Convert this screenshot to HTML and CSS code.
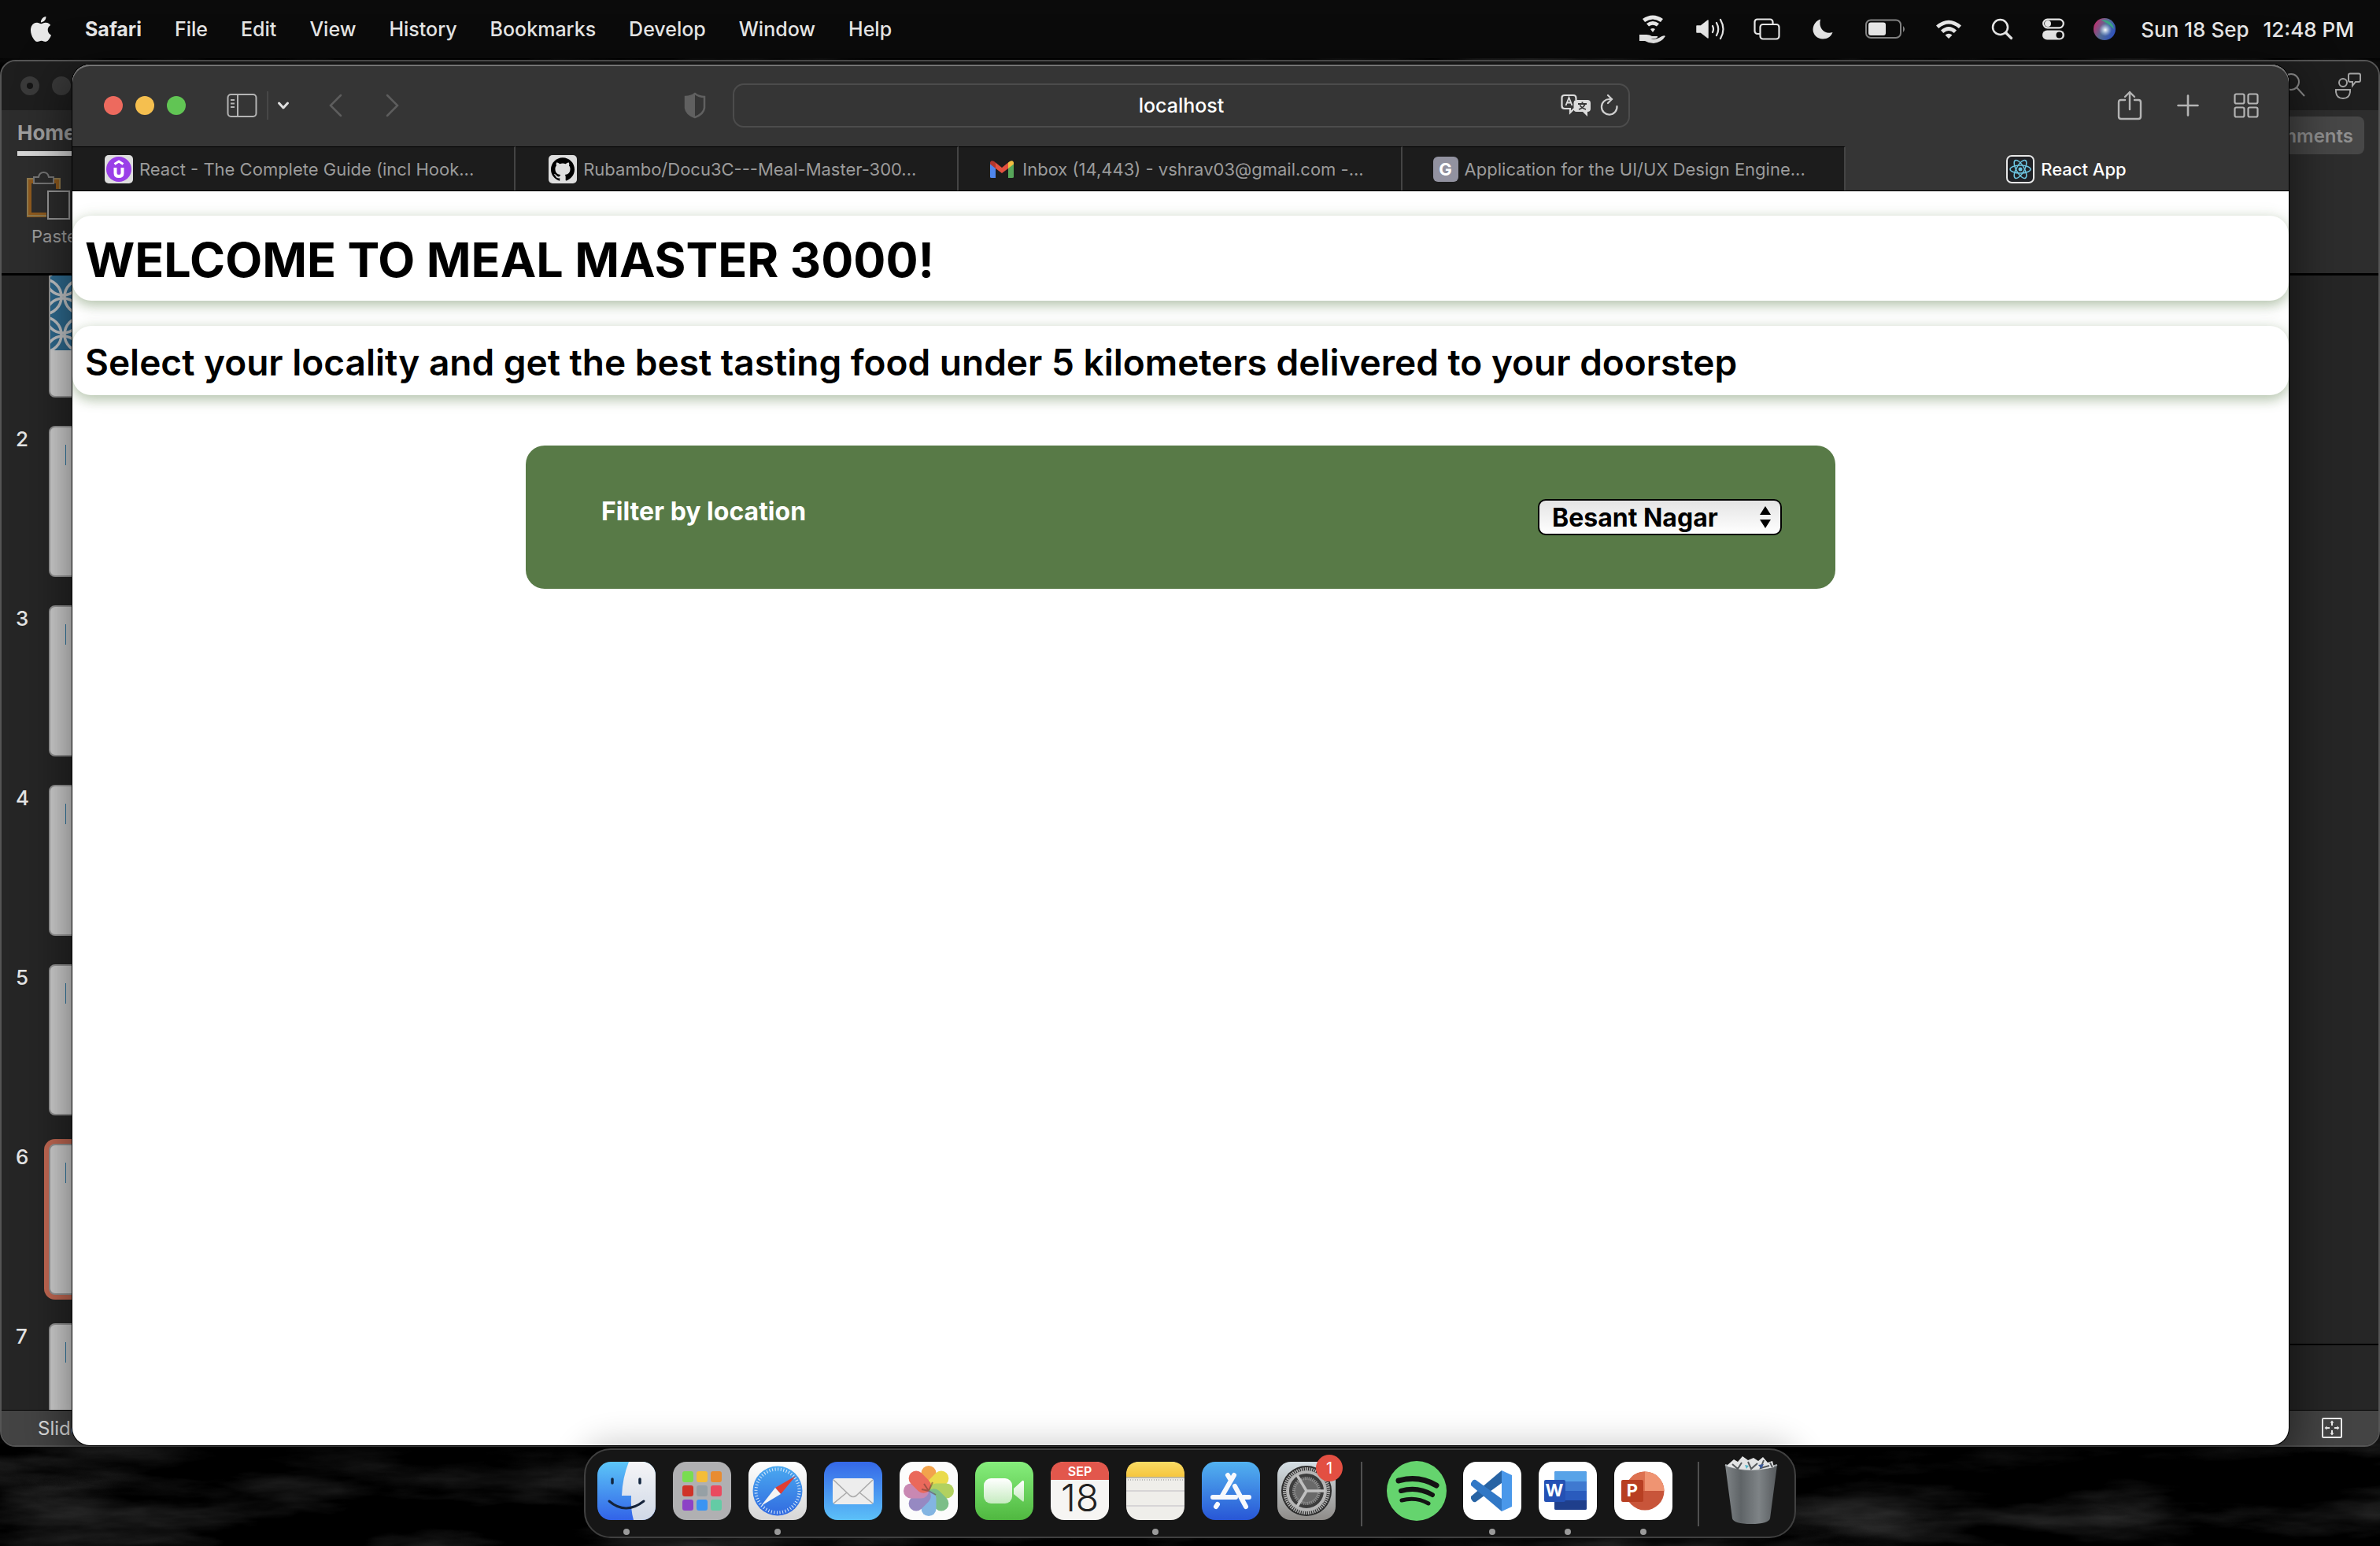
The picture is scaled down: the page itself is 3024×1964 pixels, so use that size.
FILE: index.html
```html
<!DOCTYPE html>
<html lang="en">
<head>
<meta charset="utf-8">
<meta name="viewport" content="width=device-width, initial-scale=1">
<title>React App</title>
<link rel="stylesheet" href="styles.css">
</head>
<body>
<div class="desktop">
  <svg class="wallpaper" aria-hidden="true">
    <filter id="waves" x="0" y="0" width="100%" height="100%" color-interpolation-filters="sRGB">
      <feTurbulence type="fractalNoise" baseFrequency="0.004 0.02" numOctaves="5" seed="8"/>
      <feColorMatrix values="0.4 0 0 0 -0.18  0.4 0 0 0 -0.18  0.4 0 0 0 -0.18  0 0 0 0 1"/>
    </filter>
    <rect width="100%" height="100%" filter="url(#waves)"/>
  </svg>

  <header class="menubar">
    <nav class="menus" aria-label="Application menu">
      <button class="menu" aria-label="Apple"><svg width="28" height="32" viewBox="1.500 0 21 24" fill="currentColor"><path d="M12.152 6.896c-.948 0-2.415-1.078-3.96-1.04-2.04.027-3.91 1.183-4.961 3.014-2.117 3.675-.546 9.103 1.519 12.09 1.013 1.454 2.208 3.09 3.792 3.039 1.52-.065 2.09-.987 3.935-.987 1.831 0 2.35.987 3.96.948 1.637-.026 2.676-1.48 3.676-2.948 1.156-1.688 1.636-3.325 1.662-3.415-.039-.013-3.182-1.221-3.22-4.857-.026-3.04 2.48-4.494 2.597-4.559-1.429-2.09-3.623-2.324-4.39-2.376-2-.156-3.675 1.09-4.61 1.09zM15.53 3.83c.843-1.012 1.4-2.427 1.245-3.83-1.207.052-2.662.805-3.532 1.818-.78.896-1.454 2.338-1.273 3.714 1.338.104 2.715-.688 3.559-1.701"/></svg></button>
      <button class="menu menu-app">Safari</button>
      <button class="menu">File</button>
      <button class="menu">Edit</button>
      <button class="menu">View</button>
      <button class="menu">History</button>
      <button class="menu">Bookmarks</button>
      <button class="menu">Develop</button>
      <button class="menu">Window</button>
      <button class="menu">Help</button>
    </nav>
    <div class="status">
      <svg width="36" height="38" viewBox="0 0 36 38" fill="#e8e8e8"><path d="M5 6Q18-3 31 6L28 10Q18 3 8 10ZM10 12Q18 6 26 12L23 15.500Q18 12 13 15.500ZM15 19Q18 17 21 19L18 23ZM1 26H10Q14 26 17 28H24Q25 30 20 31H15Q21 33 26 30Q32 26 34 28Q29 36 19 37Q13 37 8 34H1Z"/></svg>
      <svg width="36" height="28" viewBox="0 0 36 28" fill="none" stroke="#e8e8e8" stroke-width="2.200" stroke-linecap="round"><path d="M1 10H6L15 3V25L6 18H1Z" fill="#e8e8e8" stroke-width="1.500" stroke-linejoin="round"/><path d="M21 10Q23 14 21 18M26 6Q30.500 14 26 22M31 2Q38 14 31 26"/></svg>
      <svg width="34" height="28" viewBox="0 0 34 28" fill="none" stroke="#e8e8e8" stroke-width="2.200"><path d="M8 20H5a3.500 3.500 0 0 1-3.500-3.500V4.500A3.500 3.500 0 0 1 5 1.500H21a3.500 3.500 0 0 1 3.500 3.500V8"/><rect x="8.500" y="8" width="24" height="18.500" rx="3.500"/></svg>
      <svg width="34" height="28" viewBox="0 0 34 28" fill="#e8e8e8"><path d="M14 1.500C9 3 4.500 8 4.500 14.500C4.500 21 10 26.500 17 26.500C23 26.500 28 23 29.500 18C20 21 11 14 14 1.500Z"/></svg>
      <svg width="52" height="26" viewBox="0 0 52 26"><rect x="1" y="1.500" width="44" height="22.500" rx="6" fill="none" stroke="#848484" stroke-width="2"/><rect x="4" y="4.500" width="22" height="16.500" rx="3" fill="#e8e8e8"/><path d="M48 9q4 4 0 8Z" fill="#848484"/></svg>
      <svg width="34" height="26" viewBox="0 0 34 26" fill="#e8e8e8"><path d="M1 8.500Q17-5 33 8.500L29.800 12Q17 1 4.200 12ZM7 14.500Q17 5.500 27 14.500L23.800 18Q17 12 10.200 18ZM12.500 20.500Q17 17 21.500 20.500L17 25Z"/></svg>
      <svg width="28" height="28" viewBox="0 0 28 28" fill="none" stroke="#e8e8e8" stroke-linecap="round"><circle cx="11.500" cy="11.500" r="9.500" stroke-width="2.500"/><path d="M18.500 18.500L25.500 25.500" stroke-width="3.200"/></svg>
      <svg width="28" height="28" viewBox="0 0 28 28"><rect x="1.200" y="1.700" width="25.600" height="10.600" rx="5.300" fill="none" stroke="#e8e8e8" stroke-width="2.200"/><circle cx="7" cy="7" r="4" fill="#e8e8e8"/><rect x="0" y="15.500" width="28" height="12" rx="6" fill="#e8e8e8"/><circle cx="21.500" cy="21.500" r="4" fill="#0b0b0b"/></svg>
      <div class="siri-clock">
        <svg width="28" height="28" viewBox="0 0 28 28"><defs><linearGradient id="siri" x1="0" y1=".3" x2="1" y2=".8"><stop offset="0" stop-color="#c2306e"/><stop offset=".45" stop-color="#55709a"/><stop offset="1" stop-color="#2b50c8"/></linearGradient><radialGradient id="siriglow"><stop offset="0" stop-color="#fff"/><stop offset="1" stop-color="#bdf" stop-opacity="0"/></radialGradient></defs><circle cx="14" cy="14" r="14" fill="url(#siri)"/><path d="M9 2Q24 2 26 14Q18 6 9 2Z" fill="#3aa684"/><circle cx="15" cy="15" r="8" fill="url(#siriglow)"/></svg>
        <time class="clock"><span>Sun 18 Sep</span><span>12:48 PM</span></time>
      </div>
    </div>
  </header>

  <section class="office" aria-label="Presentation">
    <div class="office-title">
      <div class="office-lights"><span class="dim-light dim-dot"></span><span class="dim-light"></span></div>
      <div class="office-tools">
        <svg width="32" height="32" viewBox="0 0 32 32" fill="none" stroke="#8d8d8d" stroke-width="2"><circle cx="13" cy="12" r="10"/><path d="M20 19L30 30"/></svg>
        <svg width="34" height="34" viewBox="0 0 34 34" fill="none" stroke="#a3a3a3" stroke-width="2"><circle cx="11" cy="13" r="5"/><path d="M2 22H20V25Q19 33 11 33Q3 33 2 25Z"/><path d="M20 1.500H31q2 0 2 2V10q0 2-2 2H27L23 17V12H20q-2 0-2-2V3.500q0-2 2-2Z"/></svg>
      </div>
    </div>
    <div class="ribbon">
      <div class="ribbon-tabs">
        <button class="ribbon-tab">Home</button>
        <button class="comments">Comments</button>
      </div>
      <button class="paste">
        <svg width="56" height="62" viewBox="0 0 56 62" fill="none"><path d="M9 12H3V55H25" stroke="#8e5a1e" stroke-width="6"/><path d="M34 12H40V22" stroke="#8e5a1e" stroke-width="6"/><path d="M9 9H1V56H25M34 9H42V22" stroke="#8f7a4e" stroke-width="2"/><path d="M9 7H15Q16 1 21.500 1T28 7H34V15H9Z" stroke="#777" stroke-width="2"/><rect x="27" y="25" width="27" height="35" stroke="#999" stroke-width="2"/></svg>
        <span>Paste</span>
      </button>
    </div>
    <div class="office-body">
      <ol class="slides">
        <li class="slide"><span class="slide-no"></span><span class="thumb thumb-title"><svg width="100%" height="130" aria-hidden="true"><defs><pattern id="rings" width="48" height="48" patternUnits="userSpaceOnUse" x="-8" y="-10"><rect width="48" height="48" fill="#2f6d93"/><g fill="none" stroke="#c9ccce" stroke-width="3.500"><circle cx="0" cy="24" r="22"/><circle cx="48" cy="24" r="22"/><circle cx="24" cy="0" r="22"/><circle cx="24" cy="48" r="22"/></g></pattern></defs><rect width="100%" height="130" fill="url(#rings)"/></svg></span></li>
        <li class="slide"><span class="slide-no">2</span><span class="thumb"></span></li>
        <li class="slide"><span class="slide-no">3</span><span class="thumb"></span></li>
        <li class="slide"><span class="slide-no">4</span><span class="thumb"></span></li>
        <li class="slide"><span class="slide-no">5</span><span class="thumb"></span></li>
        <li class="slide"><span class="slide-no">6</span><span class="thumb thumb-active"></span></li>
        <li class="slide"><span class="slide-no">7</span><span class="thumb"></span></li>
      </ol>
      <div class="editor"><div class="canvas"></div><div class="notes"></div></div>
    </div>
    <div class="office-status">
      <span>Slide</span>
      <svg width="26" height="26" viewBox="0 0 26 26" fill="none" stroke="#eee" stroke-width="2"><rect x="1" y="1" width="24" height="24" rx="1"/><path d="M13 10V5M13 16V21M10 13H5M16 13H21"/><path d="M10.500 6.500L13 3.500L15.500 6.500ZM10.500 19.500L13 22.500L15.500 19.500ZM6.500 10.500L3.500 13L6.500 15.500ZM19.500 10.500L22.500 13L19.500 15.500Z" fill="#eee" stroke="none"/></svg>
    </div>
  </section>

  <section class="browser" aria-label="Safari">
    <div class="toolbar">
      <div class="tools-left">
        <div class="lights"><button class="light close" aria-label="Close"></button><button class="light minimise" aria-label="Minimise"></button><button class="light expand" aria-label="Zoom"></button></div>
        <div class="sidebar-tools">
          <button class="tool" aria-label="Sidebar"><svg width="40" height="32" viewBox="0 0 40 32" fill="none" stroke="#b4b4b4" stroke-width="2"><rect x="1.500" y="2" width="36" height="28" rx="4"/><path d="M14 2V30M5 9H10M5 13.500H10M5 18H10"/></svg></button>
          <span class="tool-rule"></span>
          <button class="tool" aria-label="Tab groups"><svg width="16" height="12" viewBox="0 0 16 12" fill="none" stroke="#e0e0e0" stroke-width="3" stroke-linecap="round" stroke-linejoin="round"><path d="M2.500 3L8 9L13.500 3"/></svg></button>
        </div>
        <div class="history-tools">
          <button class="tool" aria-label="Back"><svg width="17" height="30" viewBox="0 0 17 30" fill="none" stroke="#5d5d5d" stroke-width="2.500" stroke-linecap="round"><path d="M15 2L2 15L15 28"/></svg></button>
          <button class="tool" aria-label="Forward"><svg width="17" height="30" viewBox="0 0 17 30" fill="none" stroke="#5d5d5d" stroke-width="2.500" stroke-linecap="round"><path d="M2 2L15 15L2 28"/></svg></button>
        </div>
        <button class="tool shield" aria-label="Privacy report"><svg width="28" height="34" viewBox="0 0 28 34"><path d="M14 2Q19 6 26 6V20Q25 28 14 32Q3 28 2 20V6Q9 6 14 2Z" fill="none" stroke="#606060" stroke-width="2.500"/><path d="M14 2Q9 6 2 6V20Q3 28 14 32Z" fill="#606060"/></svg></button>
      </div>
      <div class="address">
        <input class="address-input" type="text" value="localhost" aria-label="Address">
        <div class="address-tools">
          <button class="tool" aria-label="Translate"><svg width="38" height="30" viewBox="0 0 38 30" fill="none"><path d="M17 19L12 24V19H5q-3.500 0-3.500-3.500V5Q1.500 2 5 2H16q3.500 0 3.500 3.500V8" stroke="#dcdcdc" stroke-width="2.200"/><path d="M6.500 15L10.500 5L14.500 15M8 11.500H13" stroke="#dcdcdc" stroke-width="1.800"/><path d="M20 8H34q4 0 4 4V19q0 4-4 4V29L28 23H20q-3.500 0-3.500-4V12q0-4 3.500-4Z" fill="#dcdcdc"/><path d="M22 13H33M27.500 10.500V13M31 13Q29 18 23 20M24.500 14.500Q26 18 32 20" stroke="#353535" stroke-width="1.800"/></svg></button>
          <button class="tool" aria-label="Reload"><svg width="24" height="28" viewBox="0 0 24 28" fill="none" stroke="#cfcfcf" stroke-width="2.200" stroke-linecap="round"><path d="M21.500 15A9.800 9.800 0 1 1 12 6H15"/><path d="M10 1L15 6L10 11"/></svg></button>
        </div>
      </div>
      <div class="tools-right">
        <button class="tool" aria-label="Share"><svg width="32" height="38" viewBox="0 0 32 38" fill="none" stroke="#b4b4b4" stroke-width="2.400" stroke-linecap="round" stroke-linejoin="round"><path d="M10 12H5Q2 12 2 15V33Q2 36 5 36H27Q30 36 30 33V15Q30 12 27 12H22"/><path d="M16 24V2M10 8L16 2L22 8"/></svg></button>
        <button class="tool" aria-label="New tab"><svg width="28" height="28" viewBox="0 0 28 28" stroke="#b4b4b4" stroke-width="2.600" stroke-linecap="round"><path d="M14 1.500V26.500M1.500 14H26.500"/></svg></button>
        <button class="tool" aria-label="Tab overview"><svg width="32" height="32" viewBox="0 0 32 32" fill="none" stroke="#b4b4b4" stroke-width="2.200"><rect x="1.500" y="1.500" width="12" height="12" rx="2"/><rect x="18.500" y="1.500" width="12" height="12" rx="2"/><rect x="1.500" y="18.500" width="12" height="12" rx="2"/><rect x="18.500" y="18.500" width="12" height="12" rx="2"/></svg></button>
      </div>
    </div>
    <nav class="tabs" aria-label="Tabs">
      <a class="tab" href="#course"><svg width="36" height="36" viewBox="0 0 36 36"><rect width="36" height="36" rx="5" fill="#dedede"/><circle cx="18" cy="18" r="16" fill="#9a3fe8"/><path d="M12.500 11.500L18 8L23.500 11.500" fill="none" stroke="#fff" stroke-width="3"/><path d="M13.500 16V23Q13.500 27 18 27T22.500 23V16" fill="none" stroke="#fff" stroke-width="4"/></svg><span>React - The Complete Guide (incl Hook...</span></a>
      <a class="tab" href="#repo"><svg width="36" height="36" viewBox="0 0 36 36"><rect width="36" height="36" rx="5" fill="#dedede"/><path transform="translate(3 3) scale(1.250)" d="M12 .297c-6.630 0-12 5.373-12 12 0 5.303 3.438 9.800 8.205 11.385.6.113.82-.258.82-.577 0-.285-.01-1.040-.015-2.040-3.338.724-4.042-1.610-4.042-1.610C4.422 18.070 3.633 17.700 3.633 17.700c-1.087-.744.084-.729.084-.729 1.205.084 1.838 1.236 1.838 1.236 1.070 1.835 2.809 1.305 3.495.998.108-.776.417-1.305.76-1.605-2.665-.3-5.466-1.332-5.466-5.930 0-1.310.465-2.380 1.235-3.220-.135-.303-.54-1.523.105-3.176 0 0 1.005-.322 3.300 1.230.96-.267 1.980-.399 3-.405 1.020.006 2.040.138 3 .405 2.280-1.552 3.285-1.230 3.285-1.230.645 1.653.24 2.873.12 3.176.765.84 1.230 1.910 1.230 3.220 0 4.610-2.805 5.625-5.475 5.920.42.36.81 1.096.81 2.220 0 1.606-.015 2.896-.015 3.286 0 .315.21.69.825.57C20.565 22.092 24 17.592 24 12.297c0-6.627-5.373-12-12-12"/></svg><span>Rubambo/Docu3C---Meal-Master-300...</span></a>
      <a class="tab" href="#mail"><svg width="36" height="36" viewBox="0 0 36 36"><path d="M3 10V28Q3 29 5 29H10V15Z" fill="#4f86ec"/><path d="M33 10V28Q33 29 31 29H26V15Z" fill="#57a65a"/><path d="M3 9.500Q4 6 8 8L10 9.500V17L3 11.500Z" fill="#b3372e"/><path d="M10 9.500L18 16L26 9.500V17L18 23L10 17Z" fill="#e2513f"/><path d="M33 9.500Q32 6 28 8L26 9.500V17L33 11.500Z" fill="#f2bd42"/></svg><span>Inbox (14,443) - vshrav03@gmail.com -...</span></a>
      <a class="tab" href="#application"><span class="letter-icon">G</span><span>Application for the UI/UX Design Engine...</span></a>
      <a class="tab tab-active" href="#app" aria-current="page"><svg width="36" height="36" viewBox="0 0 36 36" fill="none"><rect x="1" y="1" width="34" height="34" rx="6" fill="#202226" stroke="#e6e6e6" stroke-width="2"/><g stroke="#6cc5e0" stroke-width="1.500"><ellipse cx="18" cy="18" rx="13" ry="5"/><ellipse cx="18" cy="18" rx="13" ry="5" transform="rotate(60 18 18)"/><ellipse cx="18" cy="18" rx="13" ry="5" transform="rotate(120 18 18)"/></g><circle cx="18" cy="18" r="2.500" fill="#6cc5e0"/></svg><span>React App</span></a>
    </nav>
    <main class="page">
      <h1 class="card title">WELCOME TO MEAL MASTER 3000!</h1>
      <h2 class="card subtitle">Select your locality and get the best tasting food under 5 kilometers delivered to your doorstep</h2>
      <form class="filter">
        <label class="filter-label" for="location">Filter by location</label>
        <div class="picker">
          <select id="location" class="picker-select"><option>Besant Nagar</option></select>
          <svg class="picker-arrows" width="14" height="28" viewBox="0 0 14 28"><path d="M7 0L14 11H0ZM7 28L0 17H14Z"/></svg>
        </div>
      </form>
    </main>
  </section>

  <nav class="dock" aria-label="Dock">
    <button class="app running" aria-label="Finder"><svg viewBox="0 0 74 74"><defs><linearGradient id="fi" x2="0" y2="1"><stop stop-color="#5cc6f8"/><stop offset="1" stop-color="#3263e8"/></linearGradient><linearGradient id="fw" x2="0" y2="1"><stop stop-color="#f5f5f7"/><stop offset="1" stop-color="#cfd8e6"/></linearGradient><clipPath id="sq"><rect width="74" height="74" rx="17"/></clipPath></defs><g clip-path="url(#sq)"><rect width="74" height="74" fill="url(#fi)"/><path d="M40 0Q32 20 31 43H43Q42 60 46 74H74V0Z" fill="url(#fw)"/></g><path d="M19 22V27M54 22V27" stroke="#12263f" stroke-width="3.500" stroke-linecap="round"/><path d="M15 50Q36 68 59 50" fill="none" stroke="#14233a" stroke-width="3" stroke-linecap="round"/></svg></button>
    <button class="app" aria-label="Launchpad"><svg viewBox="0 0 74 74"><rect width="74" height="74" rx="17" fill="#b0b0b2"/><g><rect x="12" y="12" width="14" height="14" rx="3" fill="#78dd50"/><rect x="30" y="12" width="14" height="14" rx="3" fill="#f4bd38"/><rect x="48" y="12" width="14" height="14" rx="3" fill="#e88c31"/><rect x="12" y="30" width="14" height="14" rx="3" fill="#cf3328"/><rect x="30" y="30" width="14" height="14" rx="3" fill="#96a0a5"/><rect x="48" y="30" width="14" height="14" rx="3" fill="#ea4a5f"/><rect x="12" y="48" width="14" height="14" rx="3" fill="#8c42c6"/><rect x="30" y="48" width="14" height="14" rx="3" fill="#3a94f2"/><rect x="48" y="48" width="14" height="14" rx="3" fill="#64cba5"/></g></svg></button>
    <button class="app running" aria-label="Safari"><svg viewBox="0 0 74 74"><defs><linearGradient id="sa" x2="0" y2="1"><stop stop-color="#fff"/><stop offset="1" stop-color="#d6d6d6"/></linearGradient><linearGradient id="sb" x2="0" y2="1"><stop stop-color="#4aa9f0"/><stop offset="1" stop-color="#316ae0"/></linearGradient></defs><rect width="74" height="74" rx="17" fill="url(#sa)"/><circle cx="37" cy="37" r="31.500" fill="url(#sb)"/><circle cx="37" cy="37" r="27.500" fill="none" stroke="#dcebfb" stroke-width="4" stroke-dasharray="1 2.600"/><path d="M60 18L41 41L34 33Z" fill="#e03e33"/><path d="M34 33L41 41L16 56Z" fill="#f4f4f4"/></svg></button>
    <button class="app" aria-label="Mail"><svg viewBox="0 0 74 74"><defs><linearGradient id="ma" x2="0" y2="1"><stop stop-color="#3568e8"/><stop offset="1" stop-color="#5cc0f8"/></linearGradient></defs><rect width="74" height="74" rx="17" fill="url(#ma)"/><rect x="11" y="21" width="52" height="33" rx="4" fill="#ededed"/><path d="M12 23L33 43Q37 46 41 43L62 23M12 53L29 39M62 53L45 39" fill="none" stroke="#aaa" stroke-width="1.600"/></svg></button>
    <button class="app" aria-label="Photos"><svg viewBox="0 0 74 74"><rect width="74" height="74" rx="17" fill="#fcfcfc"/><g opacity=".9"><rect x="27.500" y="5" width="19" height="32" rx="9.500" fill="#f29a3a"/><rect x="27.500" y="5" width="19" height="32" rx="9.500" fill="#e9d838" transform="rotate(45 37 37)"/><rect x="27.500" y="5" width="19" height="32" rx="9.500" fill="#aacd50" transform="rotate(90 37 37)"/><rect x="27.500" y="5" width="19" height="32" rx="9.500" fill="#6fb87c" transform="rotate(135 37 37)"/><rect x="27.500" y="5" width="19" height="32" rx="9.500" fill="#76aee0" transform="rotate(180 37 37)"/><rect x="27.500" y="5" width="19" height="32" rx="9.500" fill="#8c7dbc" transform="rotate(225 37 37)"/><rect x="27.500" y="5" width="19" height="32" rx="9.500" fill="#c47cab" transform="rotate(270 37 37)"/><rect x="27.500" y="5" width="19" height="32" rx="9.500" fill="#e95a4a" transform="rotate(315 37 37)"/></g><path d="M37 37L28 35M37 37L31 28M37 37L42 26M37 37L46 42" stroke="#5a3a30" stroke-opacity=".5" stroke-width="2"/></svg></button>
    <button class="app" aria-label="FaceTime"><svg viewBox="0 0 74 74"><defs><linearGradient id="fa" x2="0" y2="1"><stop stop-color="#86ee7c"/><stop offset="1" stop-color="#50b840"/></linearGradient><linearGradient id="fb" x2="0" y2="1"><stop stop-color="#fff"/><stop offset="1" stop-color="#c6ebc0"/></linearGradient></defs><rect width="74" height="74" rx="17" fill="url(#fa)"/><rect x="11" y="21" width="36" height="32" rx="9" fill="url(#fb)"/><path d="M49 34L60 24Q62 23 62 26V48Q62 52 60 50L49 41Z" fill="url(#fb)"/></svg></button>
    <button class="app" aria-label="Calendar"><svg viewBox="0 0 74 74"><rect width="74" height="74" rx="17" fill="#f6f5f3"/><path d="M0 23V17Q0 0 17 0H57Q74 0 74 17V23Z" fill="#e2574c"/><text x="37" y="18" text-anchor="middle" class="cal-month">SEP</text><text x="37" y="63" text-anchor="middle" class="cal-day">18</text></svg></button>
    <button class="app running" aria-label="Notes"><svg viewBox="0 0 74 74"><defs><linearGradient id="no" x2="0" y2="1"><stop stop-color="#fadc64"/><stop offset="1" stop-color="#f6c63e"/></linearGradient></defs><rect width="74" height="74" rx="17" fill="#efeeea"/><path d="M0 19V17Q0 0 17 0H57Q74 0 74 17V19Z" fill="url(#no)"/><path d="M0 20H74" stroke="#b0a888" stroke-width="1.500"/><path d="M2 23H73" stroke="#aaa" stroke-width="1.500" stroke-dasharray="1 2"/><path d="M0 37H74M0 56H74" stroke="#cfcdd0" stroke-width="1.500"/></svg></button>
    <button class="app" aria-label="App Store"><svg viewBox="0 0 74 74"><defs><linearGradient id="as" x2="0" y2="1"><stop stop-color="#52b2f0"/><stop offset="1" stop-color="#2856d6"/></linearGradient></defs><rect width="74" height="74" rx="17" fill="url(#as)"/><g stroke="#f7f9fd" stroke-width="6" stroke-linecap="round"><path d="M41 17L26 43M20 54L18 57M14 45H43M53 45H60M33 17L36 22M42 31L56 57"/></g></svg></button>
    <button class="app" aria-label="System Preferences"><svg viewBox="0 0 74 74"><defs><linearGradient id="sp" x2="0" y2="1"><stop stop-color="#d5dfe5"/><stop offset="1" stop-color="#8e8b88"/></linearGradient></defs><rect width="74" height="74" rx="17" fill="url(#sp)"/><circle cx="37" cy="37" r="32" fill="#2e2e2e"/><circle cx="37" cy="37" r="28" fill="none" stroke="#b5b5b5" stroke-width="4" stroke-dasharray="1.500 1.200"/><circle cx="37" cy="37" r="24" fill="#3c3c3c" stroke="#b5b5b5" stroke-width="4"/><circle cx="37" cy="37" r="16" fill="#696969" stroke="#8c8c8c" stroke-width="4" stroke-dasharray="1.500 1"/><path d="M37 37H61M37 37L25 17M37 37L25 57" stroke="#c0c0c0" stroke-width="3.500"/></svg><span class="badge">1</span></button>
    <span class="dock-rule"></span>
    <button class="app" aria-label="Spotify"><svg viewBox="0 0 74 74"><circle cx="37" cy="37" r="38" fill="#65d46e"/><g fill="none" stroke="#131313" stroke-linecap="round"><path d="M14 24Q40 17 62 30" stroke-width="7"/><path d="M17 37Q38 31 57 42" stroke-width="6"/><path d="M18 49Q36 44 52 53" stroke-width="5"/></g></svg></button>
    <button class="app running" aria-label="Visual Studio Code"><svg viewBox="0 0 74 74"><rect width="74" height="74" rx="17" fill="#fff"/><path d="M49 11V27L16 51Q14 52 12 50L10 47V44Z" fill="#2763a4"/><path d="M49 63V47L16 23Q14 22 12 24L10 27V30Z" fill="#3178c6"/><path d="M49 11L62 17V57L49 63Z" fill="#4a98ea"/></svg></button>
    <button class="app running" aria-label="Word"><svg viewBox="0 0 74 74"><rect width="74" height="74" rx="17" fill="#fff"/><rect x="20" y="12" width="41" height="49" rx="2" fill="#2a5bbd"/><path d="M20 25V14q0-2 2-2H59q2 0 2 2V25Z" fill="#58a3e8"/><path d="M20 25H61V37H20Z" fill="#3f79d0"/><path d="M20 49H61V59q0 2-2 2H22q-2 0-2-2Z" fill="#1f3f8c"/><rect x="7" y="23" width="27" height="28" rx="2" fill="#2451b4"/><text x="20" y="44" text-anchor="middle" class="office-letter">W</text></svg></button>
    <button class="app running" aria-label="PowerPoint"><svg viewBox="0 0 74 74"><rect width="74" height="74" rx="17" fill="#fff"/><circle cx="39" cy="37" r="24.500" fill="#c8553a"/><path d="M39 37V12.500A24.500 24.500 0 0 0 14.500 37Z" fill="#dd7150"/><path d="M39 37V12.500A24.500 24.500 0 0 1 63.500 37Z" fill="#ef9472"/><rect x="9" y="23" width="28" height="28" rx="2" fill="#b83f22"/><text x="23" y="44" text-anchor="middle" class="office-letter">P</text></svg></button>
    <span class="dock-rule"></span>
    <button class="app trash" aria-label="Bin"><svg viewBox="0 0 68 88"><defs><linearGradient id="tr"><stop stop-color="#7f8487"/><stop offset=".3" stop-color="#5f6467"/><stop offset=".65" stop-color="#7e8386"/><stop offset="1" stop-color="#565a5d"/></linearGradient></defs><path d="M1 12Q34 24 67 12L58 80Q56 87 34 87T10 80Z" fill="url(#tr)"/><path d="M1 12Q34 24 67 12" fill="none" stroke="#a8adb0" stroke-width="2"/><path d="M4 12L12 5L17 8L23 1L30 6L37 3L43 7L49 2L55 9L61 7L63 15Q34 22 4 14Z" fill="#e2e3e4"/><path d="M10 11L17 17L22 9M30 8L34 17L42 10M50 6L46 16L57 13M58 9L61 15" fill="none" stroke="#55595c" stroke-width="2"/><path d="M26 12L31 13L28 17Z" fill="#54b7c9"/><path d="M43 12L50 11L47 17Z" fill="#3b5a9c"/></svg></button>
  </nav>
</div>
</body>
</html>
```

FILE: styles.css
```css
* { box-sizing: border-box; }

body {
  margin: 0;
  background: #000;
  font-family: Inter, "Liberation Sans", sans-serif;
}

button {
  padding: 0;
  border: 0;
  background: none;
  color: inherit;
  font: inherit;
}

svg { display: block; flex: none; }

.desktop {
  position: relative;
  height: 100vh;
  overflow: hidden;
}

.wallpaper {
  position: absolute;
  inset: 0;
  width: 100%;
  height: 100%;
}

/* Menu bar */
.menubar {
  position: relative;
  display: flex;
  justify-content: space-between;
  align-items: center;
  height: 74px;
  padding: 0 33px 0 38px;
  background: #0b0b0b;
  color: #e8e8e8;
  font-size: 25px;
  font-weight: 500;
}

.menus, .status, .siri-clock { display: flex; align-items: center; }
.menus { gap: 42px; }
.menu-app { font-weight: 700; }
.status { gap: 37px; }
.siri-clock { gap: 32px; }
.clock { display: flex; gap: 18px; font-size: 26px; white-space: nowrap; }

/* Presentation window behind the browser */
.office {
  position: absolute;
  inset: 76px 0 126px;
  display: flex;
  flex-direction: column;
  overflow: hidden;
  border: 2px solid #555;
  border-radius: 20px;
  background: #262626;
  color: #a0a0a0;
}

.office-title {
  display: flex;
  justify-content: space-between;
  align-items: center;
  height: 62px;
  padding: 0 22px 0 24px;
  background: #1e1e1e;
}

.office-lights { display: flex; gap: 16px; }
.office-tools { display: flex; gap: 36px; }

.dim-light {
  width: 24px;
  height: 24px;
  border-radius: 50%;
  background: #3a3a3a;
}

.dim-dot { border: 8px solid #3a3a3a; background: #151515; }

.ribbon {
  height: 210px;
  padding: 8px 18px 0 20px;
  border-bottom: 3px solid #000;
  background: #2d2d2d;
}

.ribbon-tabs {
  display: flex;
  justify-content: space-between;
  align-items: flex-start;
}

.ribbon-tab {
  padding: 5px 0 7px;
  border-bottom: 6px solid #d8d8d8;
  font-size: 26px;
  font-weight: 700;
  line-height: 32px;
}

.comments {
  height: 48px;
  padding: 0 14px;
  border-radius: 8px;
  background: #474747;
  color: #909090;
  font-size: 24px;
  font-weight: 600;
}

.paste {
  display: flex;
  flex-direction: column;
  gap: 6px;
  padding: 20px 0 0 12px;
  font-size: 22px;
  line-height: 28px;
}

.paste span { padding-left: 6px; }

.office-body {
  flex: 1;
  display: flex;
  min-height: 0;
  overflow: hidden;
}

.slides {
  display: flex;
  flex-direction: column;
  gap: 36px;
  width: 460px;
  margin: -37px 0 0;
  padding: 0;
  list-style: none;
}

.slide {
  display: grid;
  grid-template-columns: 42px 1fr;
  flex: none;
  height: 192px;
  padding-left: 18px;
  color: #e6e6e6;
  font-size: 26px;
  font-weight: 500;
  line-height: 34px;
}

.thumb {
  overflow: hidden;
  border: 2px solid #999;
  border-radius: 8px;
  background: #d6d6d6 linear-gradient(#2f7ca8, #2f7ca8) 19px 22px / 1px 26px no-repeat;
}

.thumb-title { background: #d6d6d6; }
.thumb-active { box-shadow: 0 0 0 6px #c66a54; }

.editor { flex: 1; display: flex; flex-direction: column; }
.canvas { flex: 1; }
.notes { height: 84px; border-top: 2px solid #000; }

.office-status {
  display: flex;
  justify-content: space-between;
  align-items: center;
  height: 45px;
  padding: 0 46px;
  border-top: 1px solid #000;
  background: #444;
  color: #e0e0e0;
  font-size: 24px;
}

/* Browser window */
.browser {
  position: absolute;
  inset: 82px 116px 128px 92px;
  display: flex;
  flex-direction: column;
  overflow: hidden;
  border-radius: 22px;
  background: #fff;
  box-shadow: 0 0 0 1px #000, 0 16px 60px 8px rgba(0, 0, 0, .5);
}

.toolbar {
  display: grid;
  grid-template-columns: 1fr minmax(0, 1140px) 1fr;
  align-items: center;
  height: 104px;
  padding: 0 38px 0 40px;
  border-radius: 22px 22px 0 0;
  background: #353535;
  box-shadow: inset 0 2px #757575;
}

.tool { display: flex; }
.tools-left, .tools-right, .sidebar-tools, .history-tools, .lights { display: flex; align-items: center; }
.lights { gap: 16px; }
.light { width: 24px; height: 24px; border-radius: 50%; }
.close { background: #ed6a5e; }
.minimise { background: #f5bf4f; }
.expand { background: #61c554; }
.sidebar-tools { gap: 11px; margin-left: 52px; }
.tool-rule { width: 2px; height: 36px; background: #474747; }
.history-tools { gap: 55px; margin-left: 50px; }
.shield { margin: 0 34px 0 auto; }
.tools-right { justify-content: flex-end; gap: 44px; }

.address { position: relative; }

.address-input {
  display: block;
  width: 100%;
  height: 56px;
  padding: 0 90px;
  border: 2px solid #4c4c4c;
  border-radius: 14px;
  background: #353535;
  color: #fff;
  font: 500 25px Inter, sans-serif;
  text-align: center;
}

.address-tools {
  position: absolute;
  top: 0;
  right: 14px;
  display: flex;
  align-items: center;
  gap: 12px;
  height: 100%;
}

.tabs {
  display: grid;
  grid-template-columns: repeat(5, minmax(0, 1fr));
  height: 57px;
  border-bottom: 1px solid #000;
  background: #353535;
}

.tab {
  display: flex;
  justify-content: center;
  align-items: center;
  gap: 8px;
  padding-right: 10px;
  border-top: 1px solid #000;
  border-right: 2px solid #444;
  background: #1c1c1c;
  color: #9b9b9b;
  font-size: 22px;
  text-decoration: none;
  white-space: nowrap;
}

.tab-active {
  padding: 0;
  border-color: #353535;
  background: #353535;
  color: #fff;
  font-weight: 500;
}

.letter-icon {
  width: 32px;
  border-radius: 6px;
  background: #9292a0;
  color: #fff;
  font-weight: 700;
  line-height: 32px;
  text-align: center;
}

/* Meal Master page */
.page { flex: 1; padding-top: 31px; }

.card {
  margin: 0 0 32px;
  padding: 18px 16px 14px;
  border-radius: 24px;
  background: #fff;
  box-shadow: 0 6px 16px rgba(88, 122, 71, .4), 0 0 20px rgba(88, 122, 71, .1);
  color: #000;
}

.title { font-size: 61px; font-weight: 700; line-height: 76px; }
.subtitle { font-size: 46px; font-weight: 600; line-height: 56px; }

.filter {
  display: flex;
  justify-content: space-between;
  align-items: flex-start;
  width: 1664px;
  max-width: 100%;
  margin: 64px auto 0;
  padding: 64px 68px 68px 96px;
  border-radius: 24px;
  background: #587a47;
}

.filter-label {
  color: #fff;
  font-size: 32px;
  font-weight: 700;
  line-height: 40px;
}

.picker { position: relative; padding-top: 4px; }

.picker-select {
  display: block;
  width: 310px;
  height: 46px;
  padding: 0 16px;
  border: 2px solid #000;
  border-radius: 10px;
  appearance: none;
  background: linear-gradient(#e4e4e4, #fff);
  color: #000;
  font: 700 32px Inter, sans-serif;
}

.picker-arrows {
  position: absolute;
  top: 13px;
  right: 14px;
  pointer-events: none;
}

/* Dock */
.dock {
  position: absolute;
  bottom: 10px;
  left: 50%;
  display: flex;
  gap: 22px;
  height: 114px;
  padding: 15px 21px 0 15px;
  border: 2px solid #404040;
  border-radius: 34px;
  background: #161616;
  box-shadow: 0 0 40px 8px rgba(0, 0, 0, .2);
  transform: translateX(-50%);
}

.app { position: relative; width: 74px; height: 74px; }
.app svg { width: 100%; height: 100%; overflow: visible; }

.running::after {
  content: "";
  position: absolute;
  top: 85px;
  left: 33px;
  width: 8px;
  height: 8px;
  border-radius: 50%;
  background: #9a9a9a;
}

.badge {
  position: absolute;
  top: -9px;
  right: -9px;
  width: 34px;
  border-radius: 50%;
  background: #e34f42;
  color: #fff;
  font-size: 20px;
  line-height: 34px;
  text-align: center;
}

.dock-rule { width: 2px; height: 82px; margin: 0 10px; background: #505050; }
.trash { width: 68px; height: 88px; margin-top: -8px; }

.cal-month { fill: #fff; font-size: 16px; font-weight: 600; }
.cal-day { fill: #222; font-size: 48px; font-weight: 300; }
.office-letter { fill: #fff; font-size: 22px; font-weight: 700; }
```
